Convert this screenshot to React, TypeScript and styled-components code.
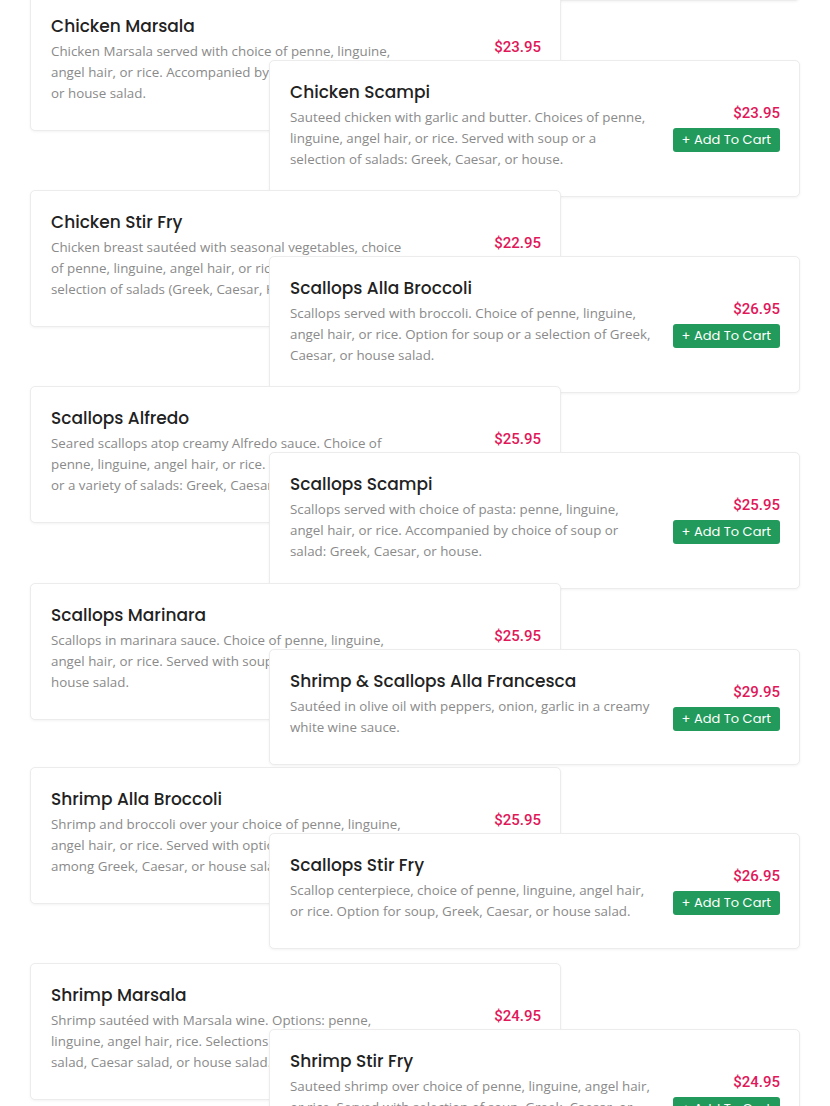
import styled, { createGlobalStyle } from 'styled-components';

interface Dish {
    name: string;
    description: string;
    price: string;
}

interface Row {
    left: Dish;
    right: Dish;
    pitch?: number;
}

const GlobalStyle = createGlobalStyle`
  html, body {
    margin: 0;
    padding: 0;
    background: #ffffff;
    overflow: hidden;
  }
`;

const MenuList = styled.div`
  margin-top: -202px;
  padding-left: 30px;
  width: 770px;
`;

const Pair = styled.div<{ $pitch?: number }>`
  display: grid;
  grid-template-columns: 239px 292px 239px;
  grid-template-rows: 66px auto;
  height: ${({ $pitch }) => ($pitch ? `${$pitch}px` : 'auto')};
`;

const Card = styled.div<{ $side: 'left' | 'right' }>`
  position: relative;
  grid-column: ${({ $side }) => ($side === 'left' ? '1 / 3' : '2 / 4')};
  grid-row: ${({ $side }) => ($side === 'left' ? '1 / 3' : '2 / 3')};
  align-self: start;
  display: flex;
  align-items: center;
  gap: 20px;
  padding: 19px 19px 20px 20px;
  background: #ffffff;
  border: 1px solid #ececec;
  border-radius: 5px;
  box-shadow: 0 1px 3px rgba(0, 0, 0, 0.05);
`;

const Info = styled.div`
  flex: 1;
  min-width: 0;
`;

const Title = styled.h3`
  margin: 0 0 3px;
  font-family: Poppins, Inter, 'Noto Sans', sans-serif;
  font-size: 17px;
  font-weight: 500;
  line-height: 24px;
  color: #222222;
`;

const Description = styled.p`
  margin: 0 0 6px;
  font-family: 'Open Sans', sans-serif;
  font-size: 13.35px;
  line-height: 21px;
  color: #8a8a8a;
`;

const Side = styled.div`
  display: flex;
  flex-direction: column;
  align-items: flex-end;
  gap: 6px;
`;

const Price = styled.span`
  font-family: Roboto, 'Liberation Sans', sans-serif;
  font-size: 15px;
  font-weight: 500;
  line-height: 18px;
  color: #e0185a;
`;

const CartButton = styled.button`
  display: inline-flex;
  align-items: center;
  height: 24px;
  font-family: Poppins, Inter, 'Noto Sans', sans-serif;
  font-size: 13px;
  line-height: 16px;
  color: #ffffff;
  background: #229a5b;
  border: none;
  border-radius: 3px;
  padding: 0 9px;
  white-space: nowrap;
  cursor: pointer;
`;

const rows: Row[] = [
    {
        left: {
            name: 'Chicken Francese',
            description:
                'Egg battered chicken in a lemon butter sauce. Choice of penne, linguine, angel hair, or rice. Served with soup or salad.',
            price: '$23.95',
        },
        right: {
            name: 'Chicken Piccata',
            description:
                'Chicken sautéed with capers in a white wine lemon sauce. Choice of penne, linguine, angel hair, or rice. Soup or salad.',
            price: '$23.95',
        },
        pitch: 196,
    },
    {
        left: {
            name: 'Chicken Marsala',
            description:
                'Chicken Marsala served with choice of penne, linguine, angel hair, or rice. Accompanied by soup, Greek, Caesar, or house salad.',
            price: '$23.95',
        },
        right: {
            name: 'Chicken Scampi',
            description:
                'Sauteed chicken with garlic and butter. Choices of penne, linguine, angel hair, or rice. Served with soup or a selection of salads: Greek, Caesar, or house.',
            price: '$23.95',
        },
        pitch: 196,
    },
    {
        left: {
            name: 'Chicken Stir Fry',
            description:
                'Chicken breast sautéed with seasonal vegetables, choice of penne, linguine, angel hair, or rice. With soup or a selection of salads (Greek, Caesar, House).',
            price: '$22.95',
        },
        right: {
            name: 'Scallops Alla Broccoli',
            description:
                'Scallops served with broccoli. Choice of penne, linguine, angel hair, or rice. Option for soup or a selection of Greek, Caesar, or house salad.',
            price: '$26.95',
        },
        pitch: 196,
    },
    {
        left: {
            name: 'Scallops Alfredo',
            description:
                'Seared scallops atop creamy Alfredo sauce. Choice of penne, linguine, angel hair, or rice. Served with side soups or a variety of salads: Greek, Caesar, or house.',
            price: '$25.95',
        },
        right: {
            name: 'Scallops Scampi',
            description:
                'Scallops served with choice of pasta: penne, linguine, angel hair, or rice. Accompanied by choice of soup or salad: Greek, Caesar, or house.',
            price: '$25.95',
        },
        pitch: 197,
    },
    {
        left: {
            name: 'Scallops Marinara',
            description:
                'Scallops in marinara sauce. Choice of penne, linguine, angel hair, or rice. Served with soup or Greek, Caesar, or house salad.',
            price: '$25.95',
        },
        right: {
            name: 'Shrimp & Scallops Alla Francesca',
            description: 'Sautéed in olive oil with peppers, onion, garlic in a creamy white wine sauce.',
            price: '$29.95',
        },
        pitch: 184,
    },
    {
        left: {
            name: 'Shrimp Alla Broccoli',
            description:
                'Shrimp and broccoli over your choice of penne, linguine, angel hair, or rice. Served with options of soup or salad among Greek, Caesar, or house salad.',
            price: '$25.95',
        },
        right: {
            name: 'Scallops Stir Fry',
            description:
                'Scallop centerpiece, choice of penne, linguine, angel hair, or rice. Option for soup, Greek, Caesar, or house salad.',
            price: '$26.95',
        },
        pitch: 196,
    },
    {
        left: {
            name: 'Shrimp Marsala',
            description:
                'Shrimp sautéed with Marsala wine. Options: penne, linguine, angel hair, rice. Selections include soup, Greek salad, Caesar salad, or house salad.',
            price: '$24.95',
        },
        right: {
            name: 'Shrimp Stir Fry',
            description:
                'Sauteed shrimp over choice of penne, linguine, angel hair, or rice. Served with selection of soup, Greek, Caesar, or house salad.',
            price: '$24.95',
        },
    },
];

function DishCard({ dish, side }: { dish: Dish; side: 'left' | 'right' }) {
    return (
        <Card $side={side}>
            <Info>
                <Title>{dish.name}</Title>
                <Description>{dish.description}</Description>
            </Info>
            <Side>
                <Price>{dish.price}</Price>
                <CartButton>+ Add To Cart</CartButton>
            </Side>
        </Card>
    );
}

export default function App() {
    return (
        <>
            <GlobalStyle />
            <MenuList>
                {rows.map((row) => (
                    <Pair key={row.left.name} $pitch={row.pitch}>
                        <DishCard dish={row.left} side="left" />
                        <DishCard dish={row.right} side="right" />
                    </Pair>
                ))}
            </MenuList>
        </>
    );
}
